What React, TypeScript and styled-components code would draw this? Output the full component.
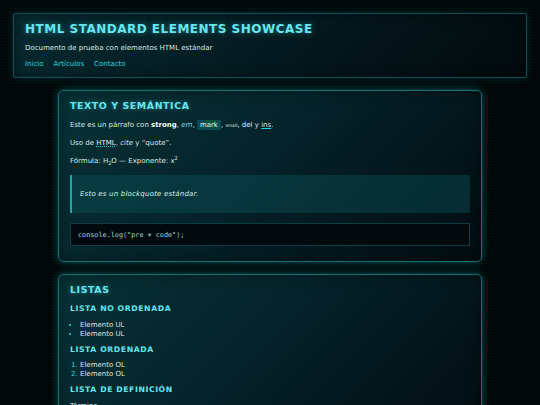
import React from 'react';
import styled, { createGlobalStyle } from 'styled-components';

const GlobalStyle = createGlobalStyle`
  html, body {
    margin: 0;
    padding: 0;
    background: #010606;
  }
  body {
    font-family: "DejaVu Sans", "Liberation Sans", sans-serif;
    color: #d6e6e6;
    background:
      repeating-linear-gradient(0deg, rgba(0, 255, 255, 0.018) 0px, rgba(0, 255, 255, 0.018) 1px, transparent 1px, transparent 3px),
      #010606;
    min-height: 100vh;
  }
`;

const Page = styled.div`
  padding: 13px 13px 20px;
  display: flex;
  flex-direction: column;
  align-items: center;
  gap: 12px;
`;

const Header = styled.header`
  align-self: stretch;
  padding: 8px 11px 9px;
  background: linear-gradient(135deg, #072a30 0%, #041a20 50%, #02090c 100%);
  border: 1px solid #0f4f55;
  border-radius: 2px;
  box-shadow: 0 0 10px rgba(0, 200, 210, 0.18), inset 0 0 12px rgba(0, 0, 0, 0.4);
`;

const Title = styled.h1`
  margin: 0;
  font-family: "DejaVu Sans", sans-serif;
  font-weight: 700;
  font-size: 12px;
  letter-spacing: 0.5px;
  color: #66e6f0;
  text-shadow: 0 0 6px rgba(80, 230, 240, 0.45);
  text-transform: uppercase;
`;

const Subtitle = styled.p`
  margin: 8px 0 0;
  font-size: 7px;
  color: #d8e8e8;
`;

const Nav = styled.nav`
  display: flex;
  gap: 10px;
  margin-top: 8px;
`;

const NavLink = styled.a`
  font-size: 7px;
  color: #2ad6dc;
  text-decoration: none;
`;

const Section = styled.section`
  width: 400px;
  padding: 9px 11px 15px;
  background: linear-gradient(135deg, #073236 0%, #05222a 45%, #020c10 100%);
  border: 1px solid #137076;
  border-radius: 5px;
  box-shadow: 0 0 9px rgba(20, 220, 230, 0.35), inset 0 0 14px rgba(0, 0, 0, 0.35);
`;

const H2 = styled.h2<{ $mb?: number }>`
  margin: 0 0 ${(p) => p.$mb ?? 10}px;
  font-family: "DejaVu Sans", sans-serif;
  font-weight: 700;
  font-size: 9.4px;
  letter-spacing: 0.6px;
  color: #66e6f0;
  text-shadow: 0 0 5px rgba(80, 230, 240, 0.4);
  text-transform: uppercase;
`;

const H3 = styled.h3<{ $first?: boolean }>`
  margin: ${(p) => (p.$first ? 0 : 6)}px 0 7.5px;
  font-family: "DejaVu Sans", sans-serif;
  font-weight: 700;
  font-size: 7.7px;
  letter-spacing: 0.6px;
  color: #66e6f0;
  text-transform: uppercase;
`;

const P = styled.p`
  margin: 0 0 9px;
  font-size: 7px;
  line-height: 9px;
  color: #d8e8e8;

  sub, sup {
    line-height: 0;
    font-size: 5px;
  }
`;

const Strong = styled.strong`
  color: #f0ffff;
`;

const Em = styled.em`
  color: #7fdde0;
`;

const Mark = styled.mark`
  background: #0b4c50;
  color: #e0f8f8;
  padding: 1px 3px;
  border-radius: 1px;
`;

const Small = styled.small`
  font-size: 4.5px;
`;

const Del = styled.del`
  text-decoration: none;
  color: #e6f0f0;
`;

const Ins = styled.ins`
  text-decoration: underline;
  text-decoration-color: #2ad6dc;
`;

const Abbr = styled.abbr`
  text-decoration: underline dotted #2ad6dc;
  color: #e6f4f4;
`;

const Quote = styled.blockquote`
  margin: 9px 0 10px;
  padding: 15px 8px;
  background: rgba(12, 80, 84, 0.45);
  border-left: 2px solid #1aa7aa;
  font-size: 7px;
  letter-spacing: 0.2px;
  font-style: italic;
  color: #d8ecec;
`;

const Pre = styled.pre`
  margin: 0;
  padding: 6.5px 7px;
  background: #020a0d;
  border: 1px solid #0f3c40;
  font-family: "DejaVu Sans Mono", monospace;
  font-size: 6.8px;
  color: #a8d8da;
`;

const Ul = styled.ul`
  margin: 0;
  padding-left: 10px;
  font-size: 7px;
  line-height: 9px;
  color: #d8e8e8;

  li::marker {
    color: #2ad6dc;
  }
`;

const Ol = styled.ol`
  margin: 0;
  padding-left: 10px;
  font-size: 7px;
  line-height: 9px;
  color: #d8e8e8;

  li::marker {
    color: #2ad6dc;
  }
`;

const Dl = styled.dl`
  margin: 0;
  font-size: 7px;
  line-height: 9px;
  color: #d8e8e8;
`;

export default function App() {
  return (
    <>
      <GlobalStyle />
      <Page>
        <Header>
          <Title>HTML Standard Elements Showcase</Title>
          <Subtitle>Documento de prueba con elementos HTML estándar</Subtitle>
          <Nav>
            <NavLink href="#">Inicio</NavLink>
            <NavLink href="#">Artículos</NavLink>
            <NavLink href="#">Contacto</NavLink>
          </Nav>
        </Header>

        <Section>
          <H2>Texto y semántica</H2>
          <P>
            Este es un párrafo con <Strong>strong</Strong>, <Em>em</Em>, <Mark>mark</Mark>,{' '}
            <Small>small</Small>, <Del>del</Del> y <Ins>ins</Ins>.
          </P>
          <P>
            Uso de <Abbr title="HyperText Markup Language">HTML</Abbr>, <cite>cite</cite> y <q>quote</q>.
          </P>
          <P>
            Fórmula: H<sub>2</sub>O — Exponente: x<sup>2</sup>
          </P>
          <Quote>Esto es un blockquote estándar.</Quote>
          <Pre>console.log("pre + code");</Pre>
        </Section>

        <Section>
          <H2 $mb={9}>Listas</H2>
          <H3 $first>Lista no ordenada</H3>
          <Ul>
            <li>Elemento UL</li>
            <li>Elemento UL</li>
          </Ul>
          <H3>Lista ordenada</H3>
          <Ol>
            <li>Elemento OL</li>
            <li>Elemento OL</li>
          </Ol>
          <H3>Lista de definición</H3>
          <Dl>
            <dt>Término</dt>
            <dd>Definición del término</dd>
          </Dl>
        </Section>
      </Page>
    </>
  );
}
